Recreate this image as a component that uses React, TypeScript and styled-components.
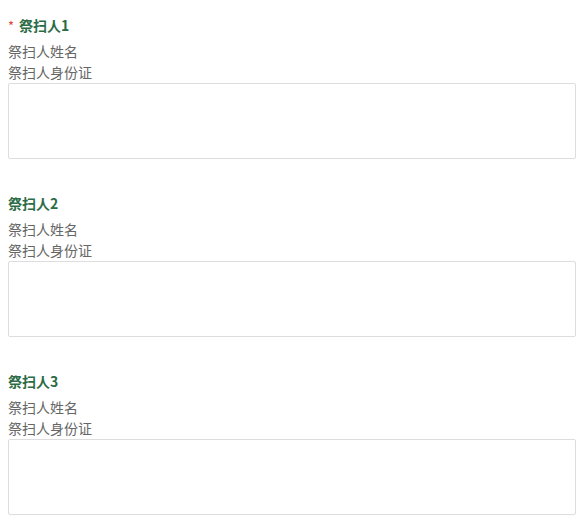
import React from "react";
import styled, { createGlobalStyle } from "styled-components";

const Global = createGlobalStyle`
  html, body { margin: 0; padding: 0; background: #fff; }
  body { font-family: "Noto Sans CJK SC", "Noto Sans", sans-serif; }
`;

const Page = styled.div`
  padding: 15px 11px 0 8px;
  display: flex;
  flex-direction: column;
`;

const Section = styled.section`
  display: flex;
  flex-direction: column;
  margin-bottom: 34px;
`;

const Title = styled.div`
  font-size: 14px;
  line-height: 21px;
  font-weight: 700;
  color: #2b6b45;
  margin-bottom: 5px;
  display: flex;
  align-items: center;
`;

const Star = styled.span`
  color: #e0453a;
  font-weight: 400;
  font-size: 13px;
  margin-right: 5px;
`;

const Label = styled.div`
  font-size: 14px;
  line-height: 21px;
  color: #666;
`;

const Area = styled.textarea`
  box-sizing: border-box;
  width: 568px;
  height: 76px;
  border: 1px solid #ddd;
  border-radius: 2px;
  resize: none;
  outline: none;
  display: block;
  margin: 0;
  padding: 4px;
  font-family: inherit;
`;

const items = [
  { name: "祭扫人1", required: true },
  { name: "祭扫人2", required: false },
  { name: "祭扫人3", required: false },
];

export default function App() {
  return (
    <>
      <Global />
      <Page>
        {items.map((it) => (
          <Section key={it.name}>
            <Title>
              {it.required && <Star>*</Star>}
              {it.name}
            </Title>
            <Label>祭扫人姓名</Label>
            <Label>祭扫人身份证</Label>
            <Area />
          </Section>
        ))}
      </Page>
    </>
  );
}
